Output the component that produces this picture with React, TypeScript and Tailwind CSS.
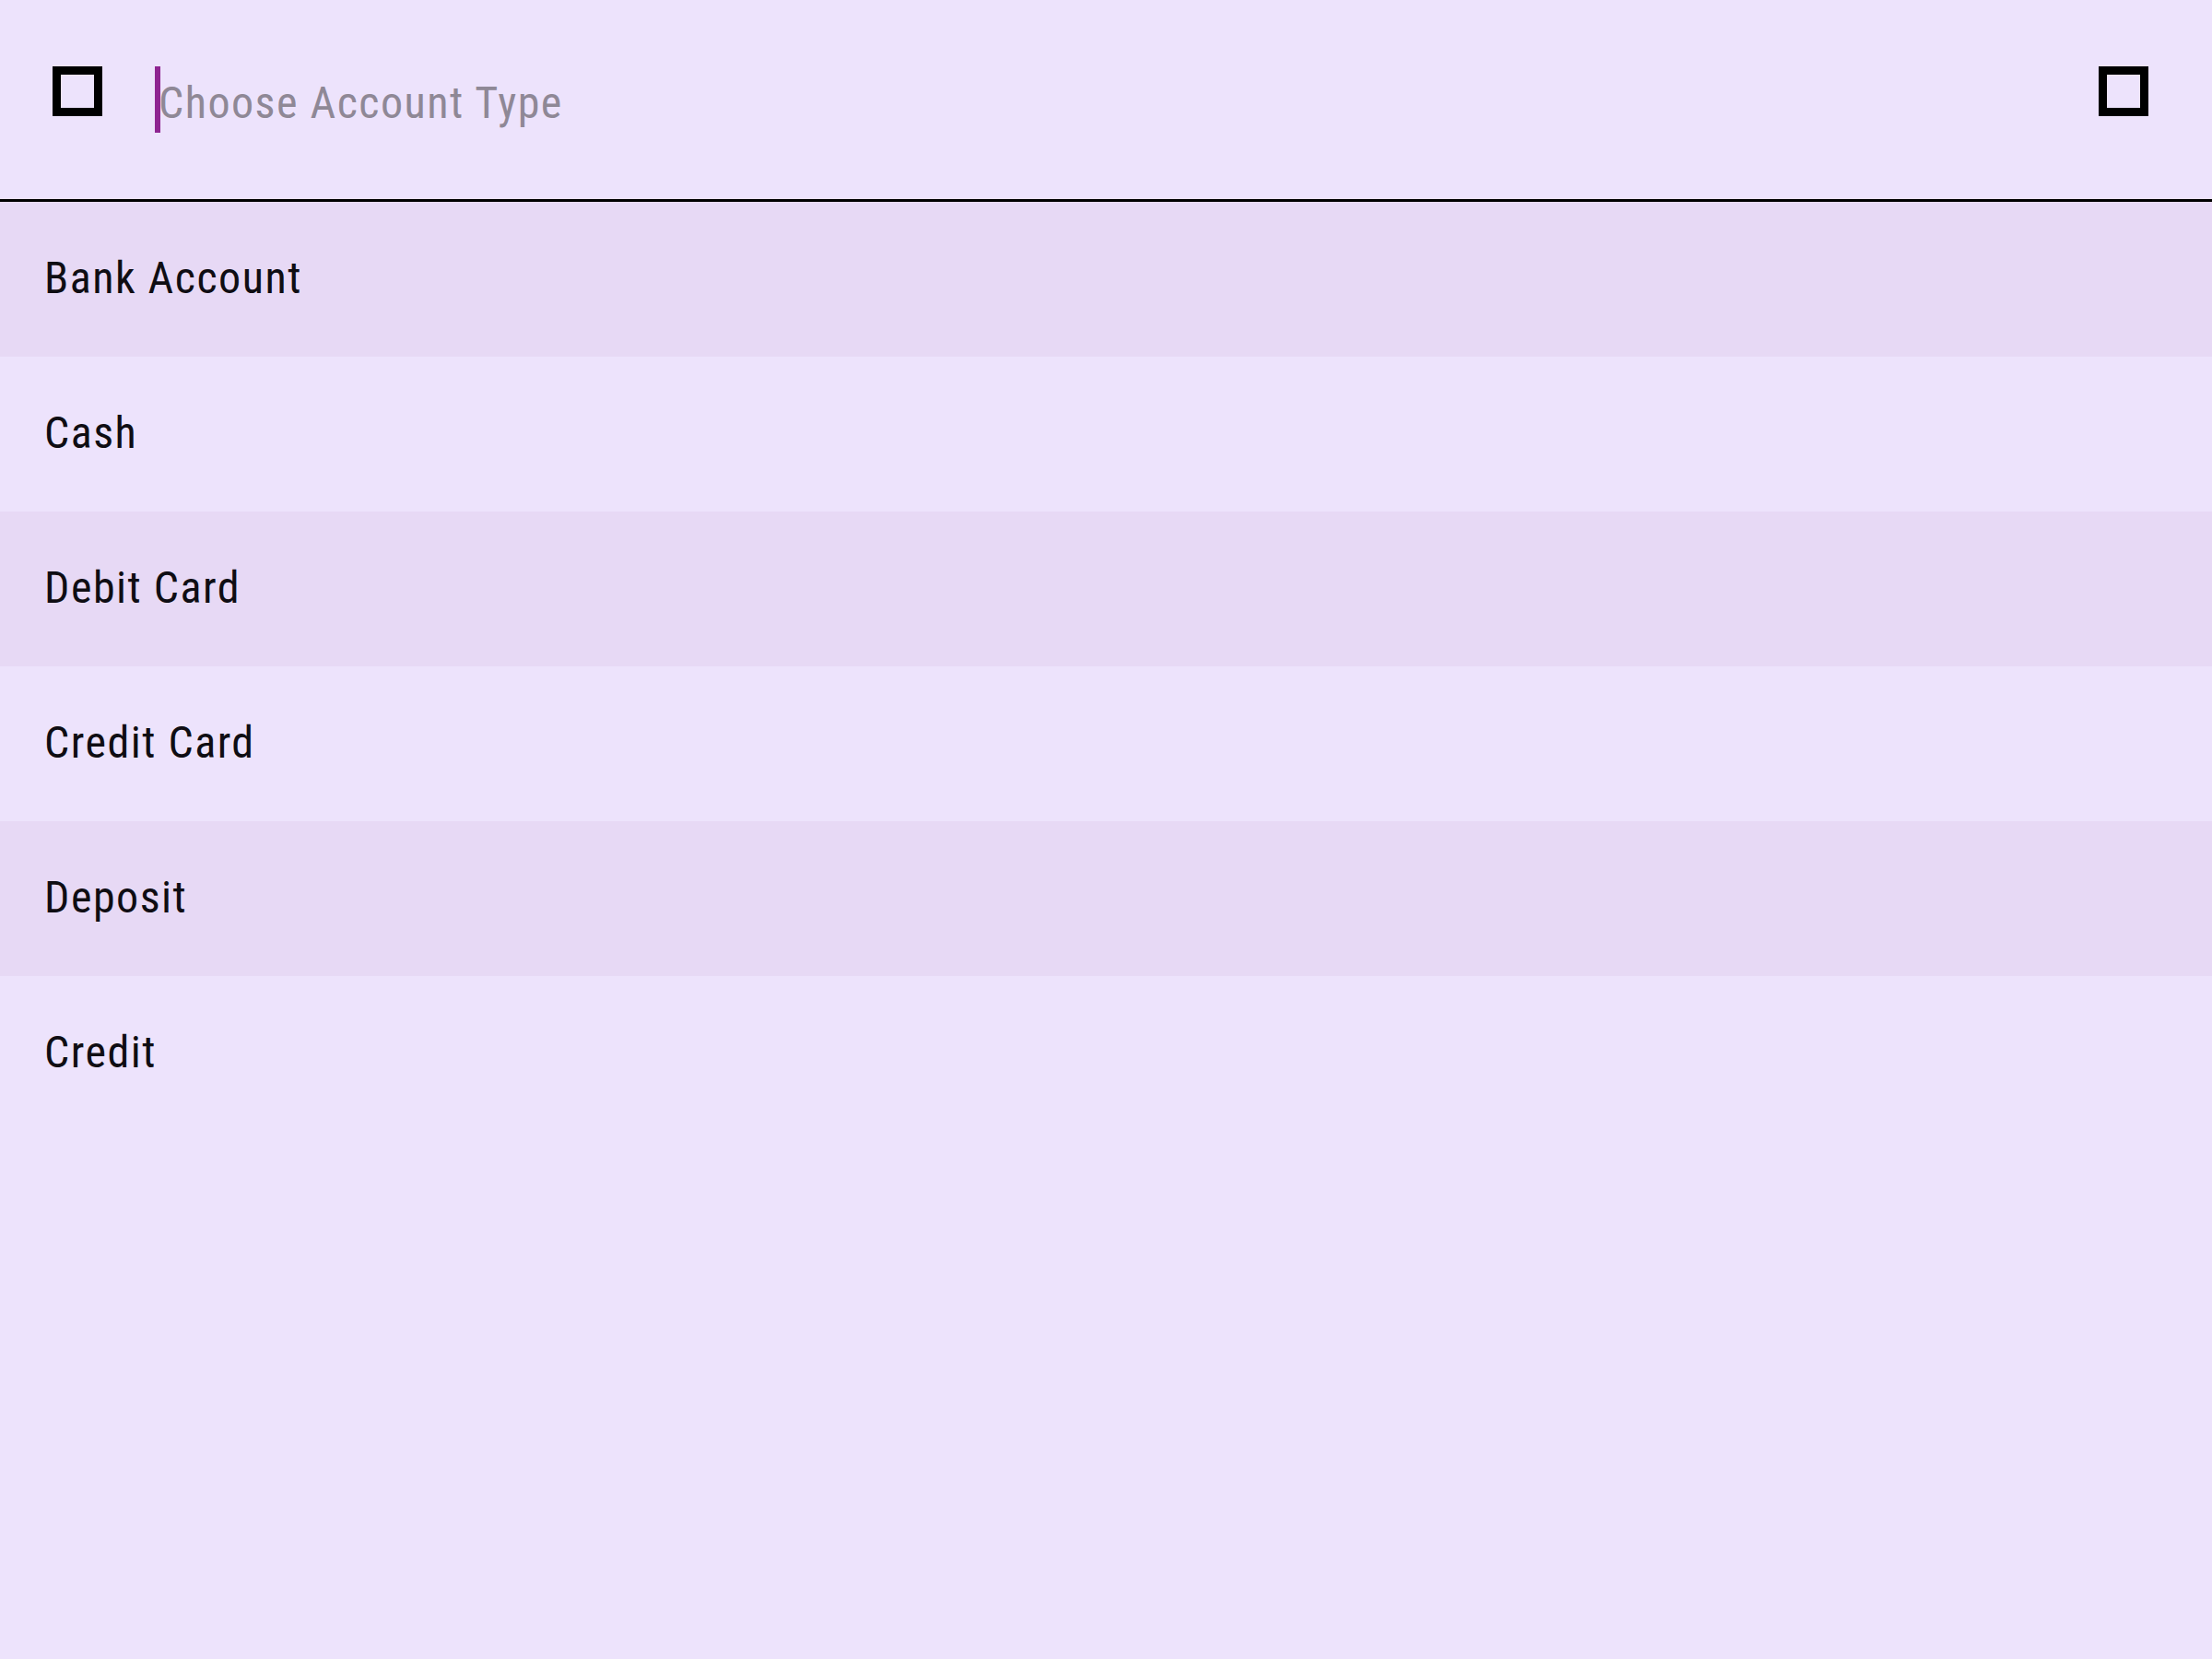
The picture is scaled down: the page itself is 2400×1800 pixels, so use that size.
const items = ["Bank Account", "Cash", "Debit Card", "Credit Card", "Deposit", "Credit"];

function MissingIcon() {
    return <div className="w-[54px] h-[54px] border-[9px] border-black shrink-0" />;
}

export default function App() {
    return (
        <div
            className="w-full min-h-[1800px] bg-[#ede3fc] text-[#0f0d13] font-stretch-condensed"
            style={{ fontFamily: "Roboto, 'Liberation Sans', sans-serif" }}
        >
            {/* search bar */}
            <div className="h-[216px] flex items-start pt-[72px] pl-[57px] pr-[69px]">
                <MissingIcon />
                <div className="flex-1 flex items-start ml-[57px]">
                    <div className="w-[6px] h-[72px] bg-[#8e2491]" />
                    <span className="text-[48px] leading-none tracking-[1.5px] text-[#8f8896] -ml-[2px] mt-[16px]">
                        Choose Account Type
                    </span>
                </div>
                <MissingIcon />
            </div>
            <div className="h-[3px] bg-black" />

            {/* list */}
            <div className="flex flex-col">
                {items.map((item, idx) => (
                    <div
                        key={item}
                        className={
                            "h-[168px] flex items-center pl-[48px] " +
                            (idx % 2 === 0 ? "bg-[#e7d9f5]" : "bg-[#ede3fc]")
                        }
                    >
                        <span className="text-[48px] leading-none tracking-[1.5px] -mt-[2px]">{item}</span>
                    </div>
                ))}
            </div>
        </div>
    );
}
